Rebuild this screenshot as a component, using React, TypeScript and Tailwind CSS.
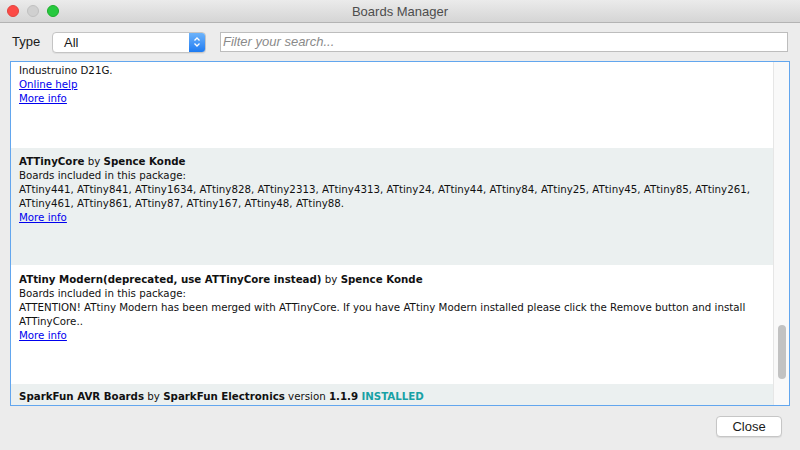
import React from 'react';

const sys = { fontFamily: '"Liberation Sans", Arial, sans-serif' };
const verdana = { fontFamily: '"DejaVu Sans", Verdana, sans-serif' };

const MoreInfo: React.FC<{ label?: string }> = ({ label = 'More info' }) => (
  <div>
    <span className="text-[#0000ee] underline underline-offset-[1px]">{label}</span>
  </div>
);

export default function App() {
  return (
    <div className="w-[800px] h-[450px] bg-[#ececec] flex flex-col overflow-hidden" style={sys}>
      {/* title bar */}
      <div className="h-[23px] shrink-0 grid grid-cols-[1fr_auto_1fr] items-center bg-gradient-to-b from-[#ebebeb] to-[#d5d5d5] border-b border-[#b3b3b3]">
        <div className="flex items-center gap-[8px] pl-[7px]">
          <span className="w-[12px] h-[12px] rounded-full bg-[#fc4a46] border border-[#e0443e]" />
          <span className="w-[12px] h-[12px] rounded-full bg-[#d0d0d0] border border-[#c0c0c0]" />
          <span className="w-[12px] h-[12px] rounded-full bg-[#27c93f] border border-[#1dad2b]" />
        </div>
        <div className="text-[13px] text-[#4d4d4d] pt-[1px]">Boards Manager</div>
        <div />
      </div>

      {/* toolbar */}
      <div className="h-[38px] shrink-0 flex items-center pl-[12px] pr-[12px] text-[13px] text-[#1a1a1a]">
        <span className="w-[40px]">Type</span>
        <div className="w-[154px] h-[21px] flex bg-white border border-[#c4c4c4] rounded-[4px] overflow-hidden shadow-[0_1px_0_rgba(0,0,0,0.05)]">
          <span className="flex-1 pl-[11px] leading-[19px]">All</span>
          <span className="w-[16px] bg-gradient-to-b from-[#6cb3fa] to-[#1b7bf2] flex items-center justify-center">
            <svg width="8" height="12" viewBox="0 0 8 12" fill="none" stroke="white" strokeWidth="1.3">
              <path d="M1.5 4.5 L4 2 L6.5 4.5" />
              <path d="M1.5 7.5 L4 10 L6.5 7.5" />
            </svg>
          </span>
        </div>
        <div className="ml-[14px] flex-1 h-[20px] bg-white border border-[#bdbdbd] flex items-center pl-[2px]">
          <span className="italic text-[#8a8a8a]">Filter your search...</span>
        </div>
      </div>

      {/* list */}
      <div className="mx-[10px] h-[345px] shrink-0 border border-[#62a6ee] bg-white flex overflow-hidden text-[10.25px] leading-[14px] text-[#111]" style={verdana}>
        <div className="flex-1 flex flex-col overflow-hidden">
          <div className="h-[86px] shrink-0 px-[8px] pt-[1px] bg-white">
            <div>Industruino D21G.</div>
            <MoreInfo label="Online help" />
            <MoreInfo />
          </div>
          <div className="h-[117px] shrink-0 px-[8px] pt-[6px] bg-[#ebf0f0]">
            <div>
              <b>ATTinyCore</b> by <b>Spence Konde</b>
            </div>
            <div>Boards included in this package:</div>
            <div>
              ATtiny441, ATtiny841, ATtiny1634, ATtiny828, ATtiny2313, ATtiny4313, ATtiny24, ATtiny44, ATtiny84, ATtiny25,
              ATtiny45, ATtiny85, ATtiny261,
              <br />
              ATtiny461, ATtiny861, ATtiny87, ATtiny167, ATtiny48, ATtiny88.
            </div>
            <MoreInfo />
          </div>
          <div className="h-[119px] shrink-0 px-[8px] pt-[7px] bg-white">
            <div>
              <b>ATtiny Modern(deprecated, use ATTinyCore instead)</b> by <b>Spence Konde</b>
            </div>
            <div>Boards included in this package:</div>
            <div>
              ATTENTION! ATtiny Modern has been merged with ATTinyCore. If you have ATtiny Modern installed please click the
              Remove button and install
              <br />
              ATTinyCore..
            </div>
            <MoreInfo />
          </div>
          <div className="flex-1 px-[8px] pt-[5px] bg-[#ebf0f0]">
            <div>
              <b>SparkFun AVR Boards</b> by <b>SparkFun Electronics</b> version <b>1.1.9</b>{' '}
              <b className="text-[#17a1a5]">INSTALLED</b>
            </div>
          </div>
        </div>
        {/* scrollbar */}
        <div className="w-[16px] shrink-0 bg-[#f9f9f9] border-l border-[#e6e6e6] flex flex-col pt-[263px]">
          <div className="mx-auto w-[8px] h-[54px] rounded-full bg-[#c2c2c2]" />
        </div>
      </div>

      {/* footer */}
      <div className="flex-1 flex items-start justify-end pr-[18px] pt-[10px]">
        <button className="w-[66px] h-[21px] bg-white border border-[#c6c6c6] rounded-[4px] text-[13px] text-[#1a1a1a] shadow-[0_1px_1px_rgba(0,0,0,0.08)]">
          Close
        </button>
      </div>
    </div>
  );
}
